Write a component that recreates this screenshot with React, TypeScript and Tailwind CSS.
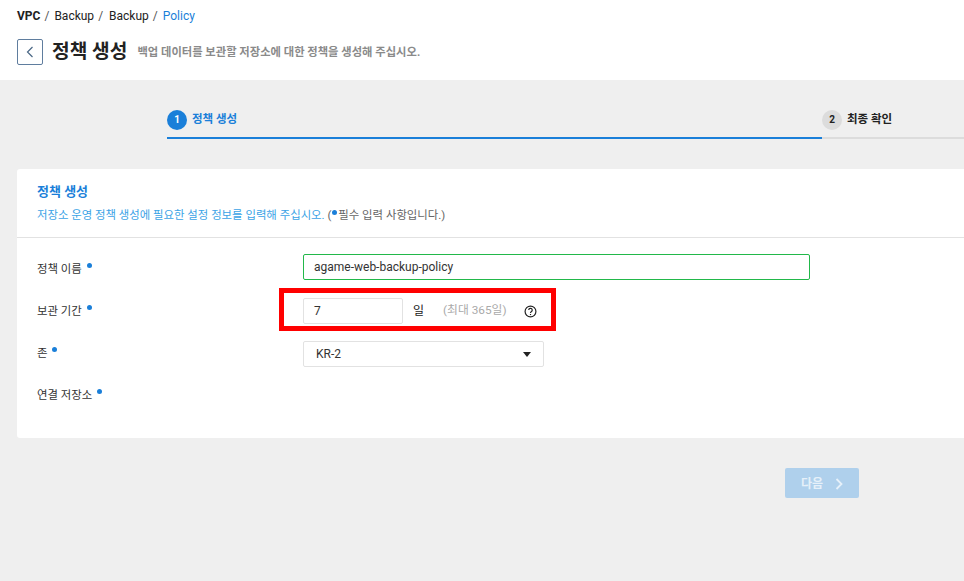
const FONT = "font-['Roboto','Noto_Sans_CJK_KR',sans-serif]";

const LABELS = ["정책 이름", "보관 기간", "존", "연결 저장소"];

function RequiredDot({ className = "" }: { className?: string }) {
  return <span className={`inline-block h-[5px] w-[5px] rounded-full bg-[#1a7fd9] ${className}`} />;
}

export default function App() {
  return (
    <div className={`${FONT} relative flex h-[581px] w-[964px] flex-col overflow-hidden bg-[#efefef]`}>
      <header className="h-[80px] shrink-0 bg-white pl-[17px]">
        <div className="flex h-[16px] translate-y-[8px] items-center text-[12px] text-[#222]">
          <span className="font-bold">VPC</span>
          <span className="ml-[4px] text-[#555]">/</span>
          <span className="ml-[5px]">Backup</span>
          <span className="ml-[4px] text-[#555]">/</span>
          <span className="ml-[6px]">Backup</span>
          <span className="ml-[4px] text-[#555]">/</span>
          <span className="ml-[5px] text-[#1a7fd9]">Policy</span>
        </div>
        <div className="mt-[23px] flex items-center">
          <button type="button" className="flex h-[26px] w-[26px] items-center justify-center rounded-[2px] border border-[#5f7d9e] bg-white">
            <svg width="8" height="12" viewBox="0 0 8 12" fill="none" stroke="#4a6785" strokeWidth="1.2">
              <path d="M6.5 1 1.5 6l5 5" />
            </svg>
          </button>
          <h1 className="ml-[9px] text-[19.2px] font-bold leading-none text-[#222]">정책 생성</h1>
          <p className="ml-[10px] mt-[2px] text-[11.3px] font-bold text-[#8a8a8a]">
            백업 데이터를 보관할 저장소에 대한 정책을 생성해 주십시오.
          </p>
        </div>
      </header>

      <div className="flex h-[59px] shrink-0 pl-[167px]">
        <div className="flex h-[59px] w-[655px] items-center border-b-2 border-[#1a7fd9] pt-[22px]">
          <span className="flex h-[20px] w-[20px] items-center justify-center rounded-full bg-[#1a7fd9] text-[10px] font-bold text-white">1</span>
          <span className="ml-[5px] mt-[1px] text-[11.5px] font-bold text-[#1a7fd9]">정책 생성</span>
        </div>
        <div className="flex h-[59px] flex-1 items-center border-b-2 border-[#dcdcdc] pt-[22px]">
          <span className="flex h-[20px] w-[20px] items-center justify-center rounded-full bg-[#dcdcdc] text-[10px] font-bold text-[#222]">2</span>
          <span className="ml-[5px] mt-[1px] text-[11.5px] font-bold text-[#222]">최종 확인</span>
        </div>
      </div>

      <section className="ml-[17px] mt-[30px] h-[269px] w-[960px] rounded-[3px] bg-white">
        <div className="h-[69px] border-b border-[#e2e2e2] pl-[20px] pt-[15px]">
          <h2 className="text-[13px] font-bold leading-[16px] text-[#1a7fd9]">정책 생성</h2>
          <p className="mt-[7px] text-[11.4px] leading-[16px] text-[#3ba3e6]">
            저장소 운영 정책 생성에 필요한 설정 정보를 입력해 주십시오.{" "}
            <span className="text-[#666]">
              (<RequiredDot className="mx-[1px] mb-[4px]" />필수 입력 사항입니다.)
            </span>
          </p>
        </div>
        <div className="flex pl-[20px]">
          <div className="w-[266px] shrink-0 pt-[11px]">
            {LABELS.map((label) => (
              <div key={label} className="flex h-[42px] items-center text-[11.4px] text-[#333]">
                <span>{label}</span>
                <RequiredDot className="mb-[9px] ml-[5px]" />
              </div>
            ))}
          </div>
          <div className="flex flex-col pt-[16px]">
            <div className="mb-[18px] flex h-[26px] w-[507px] items-center rounded-[2px] border border-[#22b84a] pl-[10px] text-[12px] text-[#333]">
              agame-web-backup-policy
            </div>
            <div className="mb-[17px] flex h-[26px] items-center">
              <div className="flex h-[26px] w-[100px] items-center rounded-[2px] border border-[#e2e2e2] pl-[10px] text-[12px] text-[#333]">7</div>
              <span className="ml-[10px] text-[12px] text-[#222]">일</span>
              <span className="ml-[19px] text-[11.8px] text-[#aaa]">(최대 365일)</span>
              <svg className="ml-[17px]" width="13" height="13" viewBox="0 0 12 12" fill="none" stroke="#222" strokeWidth="1.1">
                <circle cx="6" cy="6" r="5" />
                <path d="M4.4 4.7a1.6 1.6 0 1 1 2.5 1.3c-.6.4-.9.7-.9 1.3" />
                <path d="M6 8.3v1" />
              </svg>
            </div>
            <div className="flex h-[26px] w-[241px] items-center justify-between rounded-[2px] border border-[#e2e2e2] pl-[12px] pr-[12px] text-[12px] text-[#333]">
              KR-2
              <svg width="8" height="5" viewBox="0 0 8 5" fill="#222">
                <path d="M0 0h8L4 5z" />
              </svg>
            </div>
          </div>
        </div>
      </section>

      <div className="ml-[785px] mt-[30px]">
        <button type="button" className="flex h-[30px] w-[74px] items-center justify-center rounded-[2px] bg-[#afd0ec] pt-[1px] text-[12px] font-bold text-[#e6f0f9]">
          다음
          <svg className="ml-[12px]" width="8" height="12" viewBox="0 0 8 12" fill="none" stroke="#e6f0f9" strokeWidth="1.8">
            <path d="M1.5 1l5 5-5 5" />
          </svg>
        </button>
      </div>

      <div className="absolute left-[279px] top-[288px] h-[43px] w-[277px] border-[5px] border-[#ff0000]" />
    </div>
  );
}
